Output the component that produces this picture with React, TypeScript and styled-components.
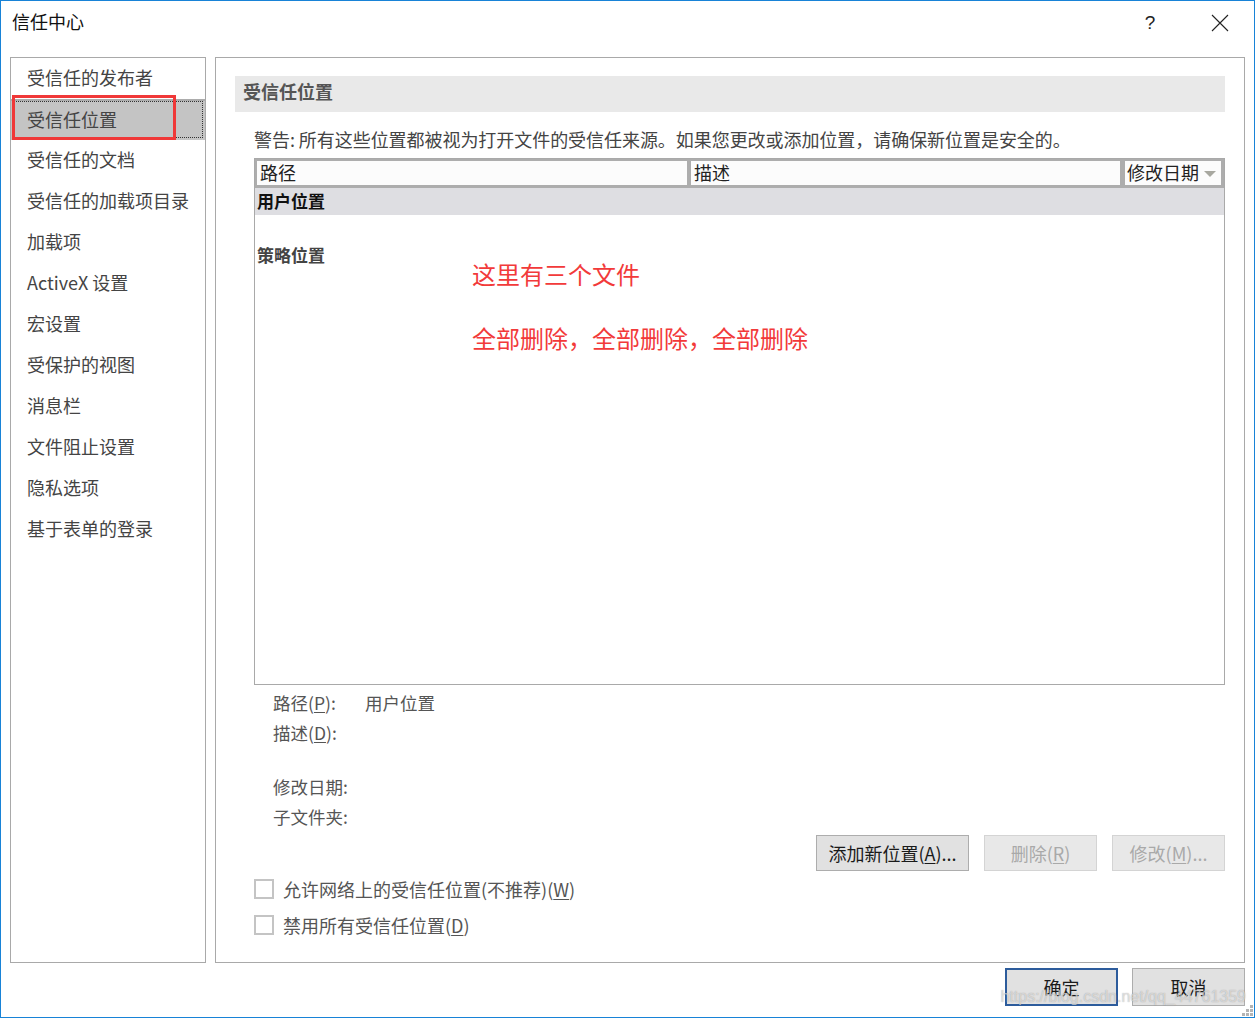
import React from 'react';
import styled, { createGlobalStyle } from 'styled-components';

const GlobalStyle = createGlobalStyle`
	html, body {
		margin: 0;
		padding: 0;
		background: #ffffff;
	}
	body {
		font-family: 'Noto Sans CJK SC', 'Noto Sans', 'Liberation Sans', sans-serif;
	}
	* {
		box-sizing: border-box;
	}
`;

const navItems = [
	'受信任的发布者',
	'受信任位置',
	'受信任的文档',
	'受信任的加载项目录',
	'加载项',
	'ActiveX 设置',
	'宏设置',
	'受保护的视图',
	'消息栏',
	'文件阻止设置',
	'隐私选项',
	'基于表单的登录',
];

const App = () => {
	return (
		<>
			<GlobalStyle />
			<Window>
				<TitleBar>
					<Title>信任中心</Title>
					<TitleButtons>
						<TitleButton>?</TitleButton>
						<TitleButton>
							<svg width="18" height="18" viewBox="0 0 18 18">
								<path d="M1 1 L17 17 M17 1 L1 17" stroke="#222" strokeWidth="1.1" fill="none" />
							</svg>
						</TitleButton>
					</TitleButtons>
				</TitleBar>

				<Body>
					<Nav>
						{navItems.map((item, index) => (
							<NavItem key={index} selected={index === 1}>
								{item}
							</NavItem>
						))}
						<RedMark />
					</Nav>

					<Main>
						<SectionHeader>受信任位置</SectionHeader>
						<Content>
							<Warning>
								警告: 所有这些位置都被视为打开文件的受信任来源。如果您更改或添加位置，请确保新位置是安全的。
							</Warning>
							<Table>
								<HeaderRow>
									<HeaderCell>路径</HeaderCell>
									<HeaderCell>描述</HeaderCell>
									<HeaderCell>
										修改日期
										<SortArrow />
									</HeaderCell>
								</HeaderRow>
								<TableBody>
									<GroupRow shaded>用户位置</GroupRow>
									<GroupRow />
									<GroupRow>策略位置</GroupRow>
									<Annotation top={71}>这里有三个文件</Annotation>
									<Annotation top={135}>全部删除，全部删除，全部删除</Annotation>
								</TableBody>
							</Table>

							<Details>
								<DetailLabel>
									路径(<u>P</u>):
								</DetailLabel>
								<DetailValue>用户位置</DetailValue>
								<DetailLabel>
									描述(<u>D</u>):
								</DetailLabel>
								<DetailValue />
								<DetailSpacer />
								<DetailLabel>修改日期:</DetailLabel>
								<DetailValue />
								<DetailLabel>子文件夹:</DetailLabel>
								<DetailValue />
							</Details>

							<ActionRow>
								<Button width={153}>
									添加新位置(<u>A</u>)...
								</Button>
								<Button width={113} disabled>
									删除(<u>R</u>)
								</Button>
								<Button width={113} disabled>
									修改(<u>M</u>)...
								</Button>
							</ActionRow>

							<CheckRow>
								<CheckBox />
								<span>
									允许网络上的受信任位置(不推荐)(<u>W</u>)
								</span>
							</CheckRow>
							<CheckRow>
								<CheckBox />
								<span>
									禁用所有受信任位置(<u>D</u>)
								</span>
							</CheckRow>
						</Content>
					</Main>
				</Body>

				<Footer>
					<Button width={113} primary>
						确定
					</Button>
					<Button width={113}>取消</Button>
				</Footer>

				<Watermark>https://blog.csdn.net/qq_44761359</Watermark>
				<Grip>
					<svg width="14" height="14" viewBox="0 0 14 14">
						<rect x="10" y="2" width="3" height="3" fill="#b4b4b4" />
						<rect x="6" y="6" width="3" height="3" fill="#b4b4b4" />
						<rect x="10" y="6" width="3" height="3" fill="#b4b4b4" />
						<rect x="2" y="10" width="3" height="3" fill="#b4b4b4" />
						<rect x="6" y="10" width="3" height="3" fill="#b4b4b4" />
						<rect x="10" y="10" width="3" height="3" fill="#b4b4b4" />
					</svg>
				</Grip>
			</Window>
		</>
	);
};

export default App;

const Window = styled.div`
	position: relative;
	width: 1255px;
	height: 1018px;
	border: 1px solid #1883d7;
	background: #ffffff;
	display: flex;
	flex-direction: column;
	overflow: hidden;
`;

const TitleBar = styled.div`
	height: 56px;
	display: flex;
	justify-content: space-between;
	align-items: flex-start;
	padding: 8px 11px 0 11px;
`;

const Title = styled.div`
	font-size: 18px;
	line-height: 24px;
	color: #111;
`;

const TitleButtons = styled.div`
	display: flex;
	gap: 24px;
	margin-top: 0;
`;

const TitleButton = styled.div`
	width: 46px;
	height: 28px;
	display: flex;
	align-items: center;
	justify-content: center;
	font-family: 'Liberation Sans', sans-serif;
	font-size: 19px;
	color: #222;
`;

const Body = styled.div`
	display: flex;
	gap: 9px;
	padding: 0 9px 0 9px;
	height: 906px;
`;

const Nav = styled.div`
	position: relative;
	width: 196px;
	border: 1px solid #a9a9a9;
	display: flex;
	flex-direction: column;
`;

const NavItem = styled.div<{ selected?: boolean }>`
	height: 41px;
	padding-left: 16px;
	padding-bottom: 2px;
	font-size: 18px;
	color: #444;
	white-space: nowrap;
	background: ${(p) => (p.selected ? '#c4c4c4' : 'transparent')};
	border-top: ${(p) => (p.selected ? '2px solid #acacac' : 'none')};
	line-height: ${(p) => (p.selected ? '37px' : '39px')};
	outline: ${(p) => (p.selected ? '1px dotted #333' : 'none')};
	outline-offset: -3px;
`;

const RedMark = styled.div`
	position: absolute;
	left: 1px;
	top: 37px;
	width: 164px;
	height: 45px;
	border: 3px solid #f03838;
	pointer-events: none;
`;

const Main = styled.div`
	flex: 1;
	border: 1px solid #a9a9a9;
	padding: 18px 19px 0 19px;
	display: flex;
	flex-direction: column;
`;

const SectionHeader = styled.div`
	height: 36px;
	line-height: 31px;
	background: #e9e9e9;
	padding-left: 8px;
	font-size: 18px;
	font-weight: bold;
	color: #555;
`;

const Content = styled.div`
	padding-left: 19px;
	display: flex;
	flex-direction: column;
`;

const Warning = styled.div`
	margin-top: 15px;
	height: 31px;
	line-height: 24px;
	font-size: 18px;
	letter-spacing: -0.05px;
	color: #444;
	white-space: nowrap;
`;

const Table = styled.div`
	height: 527px;
	border: 1px solid #a9a9a9;
	display: flex;
	flex-direction: column;
`;

const HeaderRow = styled.div`
	display: grid;
	grid-template-columns: 430px 429px 1fr;
	column-gap: 4px;
	padding: 2px 3px 3px 2px;
	background: #adadad;
`;

const HeaderCell = styled.div`
	position: relative;
	height: 24px;
	line-height: 22px;
	background: #fcfcfc;
	padding-left: 3px;
	font-size: 18px;
	color: #222;
	&:last-child {
		margin-left: 1px;
		padding-left: 2px;
	}
`;

const SortArrow = styled.span`
	position: absolute;
	right: 5px;
	top: 10px;
	width: 0;
	height: 0;
	border-left: 6px solid transparent;
	border-right: 6px solid transparent;
	border-top: 6px solid #a8a8a0;
`;

const TableBody = styled.div`
	position: relative;
	flex: 1;
`;

const GroupRow = styled.div<{ shaded?: boolean }>`
	height: 27px;
	line-height: 25px;
	padding-left: 2px;
	font-size: 17px;
	font-weight: bold;
	color: ${(p) => (p.shaded ? '#111' : '#444')};
	background: ${(p) => (p.shaded ? '#dedee2' : 'transparent')};
`;

const Annotation = styled.div<{ top: number }>`
	position: absolute;
	left: 217px;
	top: ${(p) => p.top}px;
	line-height: 30px;
	font-size: 24px;
	color: #f23a3a;
	white-space: nowrap;
`;

const Details = styled.div`
	display: grid;
	grid-template-columns: 92px 1fr;
	padding-left: 19px;
	margin-top: 3px;
	font-size: 17.5px;
	color: #555;
`;

const DetailLabel = styled.div`
	height: 30px;
	line-height: 30px;
	white-space: nowrap;
	u {
		text-underline-offset: 2px;
	}
`;

const DetailValue = styled.div`
	height: 30px;
	line-height: 30px;
	color: #555;
`;

const DetailSpacer = styled.div`
	grid-column: 1 / 3;
	height: 24px;
`;

const ActionRow = styled.div`
	display: flex;
	justify-content: flex-end;
	gap: 15px;
	margin-top: 3px;
`;

const Button = styled.div<{ width: number; disabled?: boolean; primary?: boolean }>`
	width: ${(p) => p.width}px;
	height: 36px;
	display: flex;
	align-items: center;
	justify-content: center;
	font-size: 18px;
	background: ${(p) => (p.disabled ? '#e8e8e8' : '#e1e1e1')};
	border: ${(p) =>
		p.primary ? '2px solid #2d5c9c' : p.disabled ? '1px solid #d4d4d4' : '1px solid #adadad'};
	color: ${(p) => (p.disabled ? '#a9a9a9' : '#1a1a1a')};
	white-space: nowrap;
	u {
		text-underline-offset: 2px;
	}
`;

const CheckRow = styled.div`
	height: 36px;
	display: flex;
	align-items: center;
	gap: 9px;
	font-size: 18px;
	color: #555;
	u {
		text-underline-offset: 2px;
	}
`;

const CheckBox = styled.div`
	width: 20px;
	height: 20px;
	border: 2px solid #c4c4c4;
	background: #fff;
	flex-shrink: 0;
`;

const Footer = styled.div`
	display: flex;
	justify-content: flex-end;
	gap: 14px;
	padding: 5px 9px 0 0;
	& > div {
		height: 38px;
	}
`;

const Watermark = styled.div`
	position: absolute;
	right: 8px;
	bottom: 11px;
	font-family: 'Liberation Sans', sans-serif;
	font-size: 16px;
	color: rgba(255, 255, 255, 0.55);
	text-shadow: 0 0 1px rgba(90, 90, 90, 0.55);
	pointer-events: none;
	white-space: nowrap;
`;

const Grip = styled.div`
	position: absolute;
	right: 0;
	bottom: 0;
	width: 14px;
	height: 14px;
	line-height: 0;
`;
